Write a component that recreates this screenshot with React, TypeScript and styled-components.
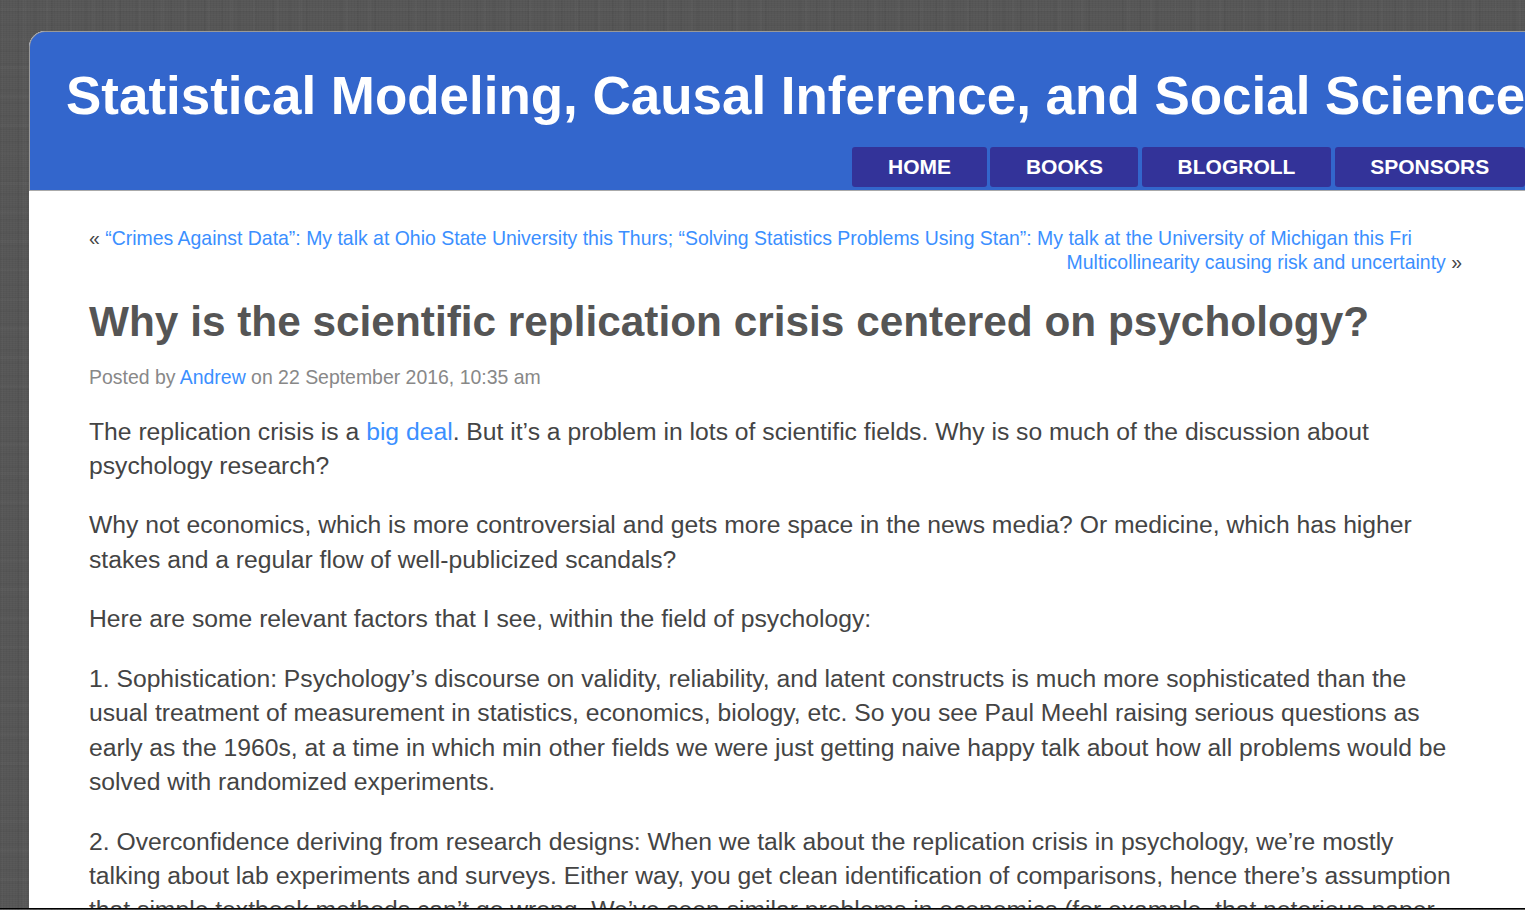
import styled, { createGlobalStyle } from "styled-components";

const GlobalStyle = createGlobalStyle`
  html, body {
    margin: 0;
    height: 910px;
    overflow: hidden;
  }
  body {
    background-color: #595959;
    background-image:
      repeating-linear-gradient(0deg, rgba(0, 0, 0, 0.03) 0 1px, transparent 1px 2px),
      repeating-linear-gradient(90deg, rgba(0, 0, 0, 0.03) 0 1px, transparent 1px 3px),
      repeating-linear-gradient(0deg, rgba(0, 0, 0, 0.025) 0 2px, transparent 2px 13px),
      repeating-linear-gradient(90deg, rgba(0, 0, 0, 0.03) 0 2px, transparent 2px 17px),
      repeating-linear-gradient(0deg, rgba(255, 255, 255, 0.015) 0 3px, transparent 3px 29px),
      repeating-linear-gradient(90deg, rgba(255, 255, 255, 0.015) 0 3px, transparent 3px 23px);
    font-family: "Liberation Sans", Arial, sans-serif;
  }
`;

const Page = styled.div`
  height: 909px;
  padding: 31px 0 0 29px;
  box-sizing: border-box;
  overflow: hidden;
  border-bottom: 1px solid #000;
`;
const Card = styled.div`
  width: 1600px;
  background: #fff;
  border-top-left-radius: 16px;
  overflow: hidden;
`;
const Header = styled.header`
  height: 160px;
  box-sizing: border-box;
  width: 1496px;
  background: #36c;
  border-top: 1px solid #999;
  border-left: 1px solid #999;
  border-bottom: 1px solid #aaa;
  border-top-left-radius: 16px;
  padding: 34px 0 0 36px;
  display: flex;
  flex-direction: column;
  overflow: hidden;
`;
const SiteTitle = styled.h1`
  margin: 0;
  font-size: 52.95px;
  line-height: 60px;
  font-weight: 700;
  color: #fff;
  white-space: nowrap;
`;
const Nav = styled.nav`
  display: flex;
  margin: 21px 0 0 786px;
`;
const NavItem = styled.a<{ $width: number }>`
  width: ${(p) => p.$width}px;
  height: 40px;
  flex: none;
  margin-right: 3.4px;
  background: #339;
  border-radius: 3px;
  color: #fff;
  font-size: 21px;
  font-weight: 700;
  line-height: 40px;
  text-align: center;
`;
const Content = styled.main`
  width: 1373px;
  padding: 35px 0 0 60px;
  color: #444;
`;
const PostNav = styled.div`
  font-size: 19.45px;
  line-height: 24px;
  color: #444;
  text-align: right;
`;
const PrevLine = styled.div`
  text-align: left;
  white-space: nowrap;
`;
const Link = styled.a`
  color: #3b8fff;
`;
const PostTitle = styled.h2`
  margin: 23px 0 0;
  font-size: 42.35px;
  line-height: 50px;
  font-weight: 700;
  color: #555;
  white-space: nowrap;
`;
const Meta = styled.div`
  margin-top: 18px;
  font-size: 19.45px;
  line-height: 24px;
  color: #888;
`;
const Paragraph = styled.p`
  margin: 25.1px 0 0;
  font-size: 24.7px;
  line-height: 34.4px;
  color: #444;
  white-space: nowrap;
`;
const FirstParagraph = styled(Paragraph)`
  margin-top: 25.5px;
`;

const App = () => (
  <Page>
    <GlobalStyle />
    <Card>
      <Header>
        <SiteTitle>Statistical Modeling, Causal Inference, and Social Science</SiteTitle>
        <Nav>
          <NavItem $width={135}>HOME</NavItem>
          <NavItem $width={148}>BOOKS</NavItem>
          <NavItem $width={189.5}>BLOGROLL</NavItem>
          <NavItem $width={190}>SPONSORS</NavItem>
        </Nav>
      </Header>
      <Content>
        <PostNav>
          <PrevLine>
            « <Link>“Crimes Against Data”: My talk at Ohio State University this Thurs; “Solving Statistics Problems Using Stan”: My talk at the University of Michigan this Fri</Link>
          </PrevLine>
          <Link>Multicollinearity causing risk and uncertainty</Link> »
        </PostNav>
        <PostTitle>Why is the scientific replication crisis centered on psychology?</PostTitle>
        <Meta>
          Posted by <Link>Andrew</Link> on 22 September 2016, 10:35 am
        </Meta>
        <FirstParagraph>
          The replication crisis is a <Link>big deal</Link>. But it’s a problem in lots of scientific fields. Why is so much of the discussion about
          <br />
          psychology research?
        </FirstParagraph>
        <Paragraph>
          Why not economics, which is more controversial and gets more space in the news media? Or medicine, which has higher
          <br />
          stakes and a regular flow of well-publicized scandals?
        </Paragraph>
        <Paragraph>Here are some relevant factors that I see, within the field of psychology:</Paragraph>
        <Paragraph>
          1. Sophistication: Psychology’s discourse on validity, reliability, and latent constructs is much more sophisticated than the
          <br />
          usual treatment of measurement in statistics, economics, biology, etc. So you see Paul Meehl raising serious questions as
          <br />
          early as the 1960s, at a time in which min other fields we were just getting naive happy talk about how all problems would be
          <br />
          solved with randomized experiments.
        </Paragraph>
        <Paragraph>
          2. Overconfidence deriving from research designs: When we talk about the replication crisis in psychology, we’re mostly
          <br />
          talking about lab experiments and surveys. Either way, you get clean identification of comparisons, hence there’s assumption
          <br />
          that simple textbook methods can’t go wrong. We’ve seen similar problems in economics (for example, that notorious paper
        </Paragraph>
      </Content>
    </Card>
  </Page>
);

export default App;
